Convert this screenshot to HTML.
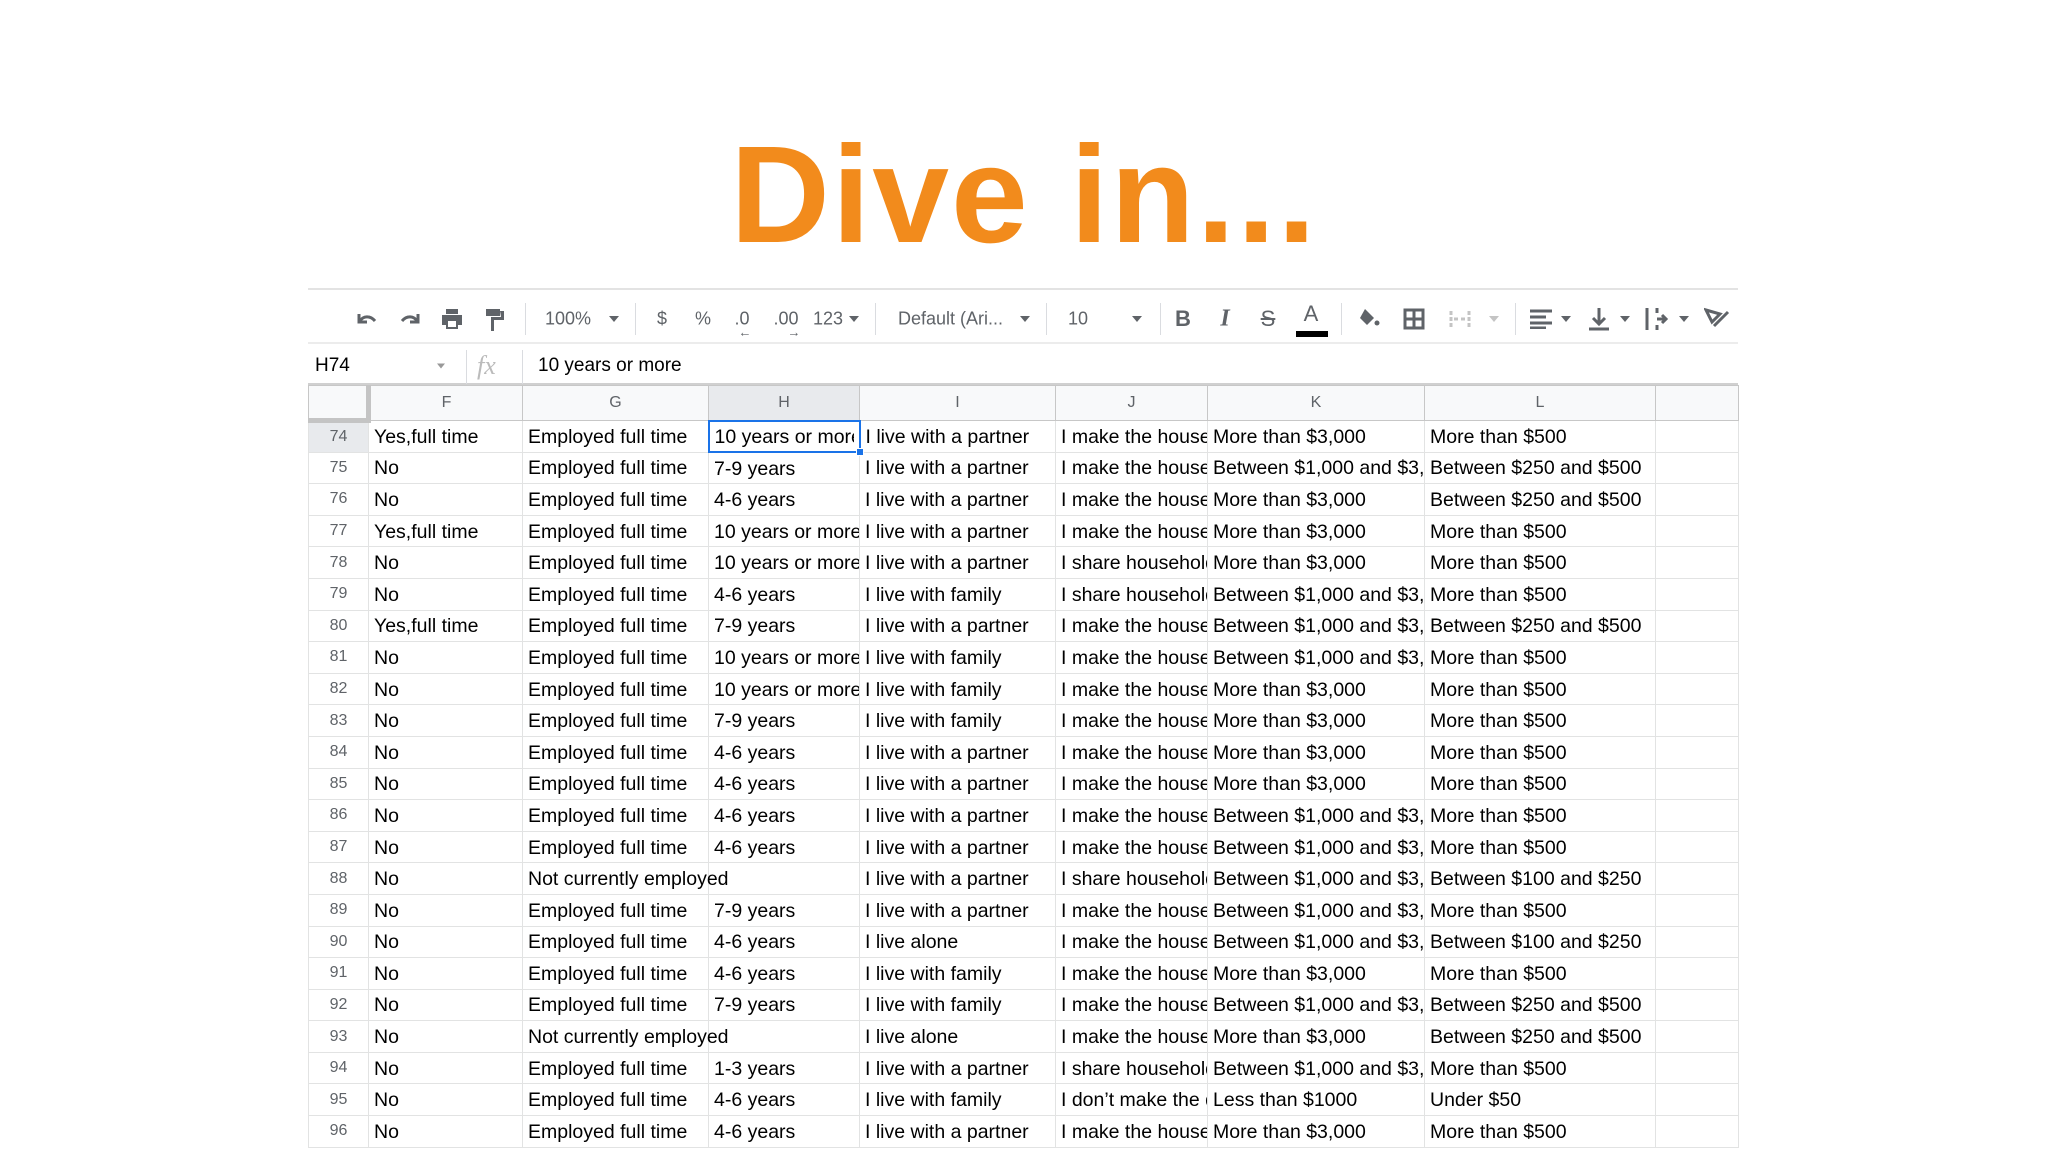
<!DOCTYPE html>
<html><head><meta charset="utf-8"><style>
*{margin:0;padding:0;box-sizing:border-box}
body{width:2048px;height:1152px;background:#fff;position:relative;overflow:hidden;font-family:"Liberation Sans",Arial,sans-serif;color:#000}
.title{position:absolute;left:0;width:2048px;top:125px;line-height:140px;text-align:center;font-size:138px;font-weight:bold;color:#f28b1c;letter-spacing:2px}
.hl{position:absolute;left:308px;width:1430px;height:2px;background:#e3e3e3}
.ti{position:absolute;top:319px;transform:translate(-50%,-50%);color:#5f6368;font-size:18px;white-space:nowrap}
.sep{position:absolute;top:303px;width:1px;height:32px;background:#dadce0}
.car{position:absolute;top:319px;transform:translate(-50%,-50%);width:0;height:0;border-left:5px solid transparent;border-right:5px solid transparent;border-top:6px solid #5f6368}
.fi{position:absolute;top:366px;transform:translateY(-50%);font-size:19px;white-space:nowrap}
table{position:absolute;left:308px;top:385px;border-collapse:collapse;table-layout:fixed;width:1430px}
td{border:1px solid #e2e3e3;height:31.6px;padding:2px 5px 0;font-size:19.5px;white-space:nowrap;overflow:hidden;vertical-align:middle}
tr.h td{height:35px;background:#f8f9fa;color:#5f6368;font-size:16px;text-align:center;border-color:#c7c7c7;padding:0}
td.n{background:#fff;color:#5f6368;font-size:16px;text-align:center;padding:0}
td.ov{overflow:visible;position:relative;z-index:2}
</style></head><body>
<div class="title">Dive in...</div>
<div class="hl" style="top:288px"></div>
<div class="hl" style="top:342px;background:#ececec"></div>
<div class="hl" style="top:383px;background:#d0d0d0"></div>

<svg style="position:absolute;left:355px;top:308px" width="24" height="22" viewBox="0 0 24 22"><path d="M4 6v8h8M5 13c3-5 10-6 15 0" fill="none" stroke="#5f6368" stroke-width="3"/></svg>
<svg style="position:absolute;left:398px;top:308px" width="24" height="22" viewBox="0 0 24 22"><path d="M20 6v8h-8M19 13c-3-5-10-6-15 0" fill="none" stroke="#5f6368" stroke-width="3"/></svg>
<svg style="position:absolute;left:440px;top:307px" width="24" height="24" viewBox="0 0 24 24"><path d="M6 2h12v5H6zM2 8h20v10h-4v4H6v-4H2z" fill="#5f6368"/><rect x="8" y="14" width="8" height="6" fill="#fff"/></svg>
<svg style="position:absolute;left:484px;top:307px" width="22" height="26" viewBox="0 0 22 26"><path d="M2 2h14v7H2zM16 4h4v9h-10v11h-3V10h10" fill="#5f6368"/></svg>
<div class="sep" style="left:525px"></div>
<div class="ti" style="left:568px">100%</div><div class="car" style="left:614px"></div>
<div class="sep" style="left:635px"></div>
<div class="ti" style="left:662px">$</div>
<div class="ti" style="left:703px">%</div>
<div class="ti" style="left:742px">.0<span style="position:absolute;left:4px;top:16px;font-size:13px">←</span></div>
<div class="ti" style="left:786px">.00<span style="position:absolute;left:14px;top:16px;font-size:13px">→</span></div>
<div class="ti" style="left:828px">123</div><div class="car" style="left:854px"></div>
<div class="sep" style="left:875px"></div>
<div class="ti" style="left:898px;transform:translateY(-50%)">Default (Ari...</div><div class="car" style="left:1025px"></div>
<div class="sep" style="left:1046px"></div>
<div class="ti" style="left:1068px;transform:translateY(-50%)">10</div><div class="car" style="left:1137px"></div>
<div class="sep" style="left:1160px"></div>
<div class="ti" style="left:1183px;font-weight:bold;font-size:22px">B</div>
<div class="ti" style="left:1225px;font-style:italic;font-family:'Liberation Serif',serif;font-size:24px;font-weight:bold">I</div>
<div class="ti" style="left:1268px;font-size:22px;text-decoration:line-through">S</div>
<div class="ti" style="left:1311px;font-size:22px;top:314px">A</div>
<div style="position:absolute;left:1296px;top:331px;width:32px;height:6px;background:#000"></div>
<div class="sep" style="left:1341px"></div>
<svg style="position:absolute;left:1356px;top:307px" width="26" height="24" viewBox="0 0 26 24"><path d="M9 2l9 9-7 7-7-7z" fill="#5f6368"/><circle cx="21" cy="16" r="2.5" fill="#5f6368"/></svg>
<svg style="position:absolute;left:1403px;top:308px" width="22" height="22" viewBox="0 0 22 22"><path d="M2 2h18v18H2zM11 2v18M2 11h18" fill="none" stroke="#5f6368" stroke-width="3"/></svg>
<svg style="position:absolute;left:1449px;top:309px" width="22" height="20" viewBox="0 0 22 20"><path d="M2 2v16M20 2v16M5 10h5M12 10h5" fill="none" stroke="#c4c4c4" stroke-width="3" stroke-dasharray="4 2"/></svg>
<div class="car" style="left:1494px;border-top-color:#c4c4c4"></div>
<div class="sep" style="left:1515px"></div>
<svg style="position:absolute;left:1530px;top:309px" width="22" height="20" viewBox="0 0 22 20"><path d="M0 2h22M0 8h16M0 14h22M0 19h16" stroke="#5f6368" stroke-width="3"/></svg><div class="car" style="left:1566px"></div>
<svg style="position:absolute;left:1588px;top:306px" width="22" height="26" viewBox="0 0 22 26"><path d="M11 2v16M5 12l6 6 6-6M1 23h20" fill="none" stroke="#5f6368" stroke-width="3"/></svg><div class="car" style="left:1625px"></div>
<svg style="position:absolute;left:1645px;top:306px" width="24" height="26" viewBox="0 0 24 26"><path d="M2 2v22M12 2v5M12 19v5M12 13h9M17 9l4 4-4 4" fill="none" stroke="#5f6368" stroke-width="3"/></svg><div class="car" style="left:1684px"></div>
<svg style="position:absolute;left:1704px;top:306px" width="26" height="26" viewBox="0 0 26 26"><path d="M2 4l14 4-8 8zM10 20L24 6" fill="none" stroke="#5f6368" stroke-width="3"/></svg>

<div class="fi" style="left:315px">H74</div>
<div class="car" style="left:441px;top:366px;border-top-color:#999;border-width:5px 4px 0"></div>
<div class="sep" style="left:466px;top:350px;height:34px"></div>
<div class="fi" style="left:477px;font-family:'Liberation Serif',serif;font-style:italic;font-size:26px;color:#bbb">fx</div>
<div class="sep" style="left:522px;top:350px;height:34px"></div>
<div class="fi" style="left:538px">10 years or more</div>

<table>
<colgroup><col style="width:60px"><col style="width:154px"><col style="width:186px"><col style="width:151px"><col style="width:196px"><col style="width:152px"><col style="width:217px"><col style="width:231px"><col style="width:83px"></colgroup>
<tr class="h"><td style="border-right:5px solid #c4c4c4;border-bottom:5px solid #c4c4c4;background:#f8f9fa"></td><td>F</td><td>G</td><td style="background:#e8eaed">H</td><td>I</td><td>J</td><td>K</td><td>L</td><td></td></tr>
<tr><td class="n" style="background:#e8eaed">74</td><td>Yes,full time</td><td>Employed full time</td><td style="border:2px solid #1a73e8;position:relative;overflow:visible"><div style="overflow:hidden">10 years or more</div><div style="position:absolute;right:-5px;bottom:-5px;width:8px;height:8px;background:#1a73e8;border:1px solid #fff"></div></td><td>I live with a partner</td><td>I make the household decisions</td><td>More than $3,000</td><td>More than $500</td><td></td></tr>
<tr><td class="n">75</td><td>No</td><td>Employed full time</td><td>7-9 years</td><td>I live with a partner</td><td>I make the household decisions</td><td>Between $1,000 and $3,000</td><td>Between $250 and $500</td><td></td></tr>
<tr><td class="n">76</td><td>No</td><td>Employed full time</td><td>4-6 years</td><td>I live with a partner</td><td>I make the household decisions</td><td>More than $3,000</td><td>Between $250 and $500</td><td></td></tr>
<tr><td class="n">77</td><td>Yes,full time</td><td>Employed full time</td><td>10 years or more</td><td>I live with a partner</td><td>I make the household decisions</td><td>More than $3,000</td><td>More than $500</td><td></td></tr>
<tr><td class="n">78</td><td>No</td><td>Employed full time</td><td>10 years or more</td><td>I live with a partner</td><td>I share household decisions</td><td>More than $3,000</td><td>More than $500</td><td></td></tr>
<tr><td class="n">79</td><td>No</td><td>Employed full time</td><td>4-6 years</td><td>I live with family</td><td>I share household decisions</td><td>Between $1,000 and $3,000</td><td>More than $500</td><td></td></tr>
<tr><td class="n">80</td><td>Yes,full time</td><td>Employed full time</td><td>7-9 years</td><td>I live with a partner</td><td>I make the household decisions</td><td>Between $1,000 and $3,000</td><td>Between $250 and $500</td><td></td></tr>
<tr><td class="n">81</td><td>No</td><td>Employed full time</td><td>10 years or more</td><td>I live with family</td><td>I make the household decisions</td><td>Between $1,000 and $3,000</td><td>More than $500</td><td></td></tr>
<tr><td class="n">82</td><td>No</td><td>Employed full time</td><td>10 years or more</td><td>I live with family</td><td>I make the household decisions</td><td>More than $3,000</td><td>More than $500</td><td></td></tr>
<tr><td class="n">83</td><td>No</td><td>Employed full time</td><td>7-9 years</td><td>I live with family</td><td>I make the household decisions</td><td>More than $3,000</td><td>More than $500</td><td></td></tr>
<tr><td class="n">84</td><td>No</td><td>Employed full time</td><td>4-6 years</td><td>I live with a partner</td><td>I make the household decisions</td><td>More than $3,000</td><td>More than $500</td><td></td></tr>
<tr><td class="n">85</td><td>No</td><td>Employed full time</td><td>4-6 years</td><td>I live with a partner</td><td>I make the household decisions</td><td>More than $3,000</td><td>More than $500</td><td></td></tr>
<tr><td class="n">86</td><td>No</td><td>Employed full time</td><td>4-6 years</td><td>I live with a partner</td><td>I make the household decisions</td><td>Between $1,000 and $3,000</td><td>More than $500</td><td></td></tr>
<tr><td class="n">87</td><td>No</td><td>Employed full time</td><td>4-6 years</td><td>I live with a partner</td><td>I make the household decisions</td><td>Between $1,000 and $3,000</td><td>More than $500</td><td></td></tr>
<tr><td class="n">88</td><td>No</td><td class="ov">Not currently employed</td><td style="border-left-color:transparent"></td><td>I live with a partner</td><td>I share household decisions</td><td>Between $1,000 and $3,000</td><td>Between $100 and $250</td><td></td></tr>
<tr><td class="n">89</td><td>No</td><td>Employed full time</td><td>7-9 years</td><td>I live with a partner</td><td>I make the household decisions</td><td>Between $1,000 and $3,000</td><td>More than $500</td><td></td></tr>
<tr><td class="n">90</td><td>No</td><td>Employed full time</td><td>4-6 years</td><td>I live alone</td><td>I make the household decisions</td><td>Between $1,000 and $3,000</td><td>Between $100 and $250</td><td></td></tr>
<tr><td class="n">91</td><td>No</td><td>Employed full time</td><td>4-6 years</td><td>I live with family</td><td>I make the household decisions</td><td>More than $3,000</td><td>More than $500</td><td></td></tr>
<tr><td class="n">92</td><td>No</td><td>Employed full time</td><td>7-9 years</td><td>I live with family</td><td>I make the household decisions</td><td>Between $1,000 and $3,000</td><td>Between $250 and $500</td><td></td></tr>
<tr><td class="n">93</td><td>No</td><td class="ov">Not currently employed</td><td style="border-left-color:transparent"></td><td>I live alone</td><td>I make the household decisions</td><td>More than $3,000</td><td>Between $250 and $500</td><td></td></tr>
<tr><td class="n">94</td><td>No</td><td>Employed full time</td><td>1-3 years</td><td>I live with a partner</td><td>I share household decisions</td><td>Between $1,000 and $3,000</td><td>More than $500</td><td></td></tr>
<tr><td class="n">95</td><td>No</td><td>Employed full time</td><td>4-6 years</td><td>I live with family</td><td>I don’t make the decisions</td><td>Less than $1000</td><td>Under $50</td><td></td></tr>
<tr><td class="n">96</td><td>No</td><td>Employed full time</td><td>4-6 years</td><td>I live with a partner</td><td>I make the household decisions</td><td>More than $3,000</td><td>More than $500</td><td></td></tr>
</table>
</body></html>
